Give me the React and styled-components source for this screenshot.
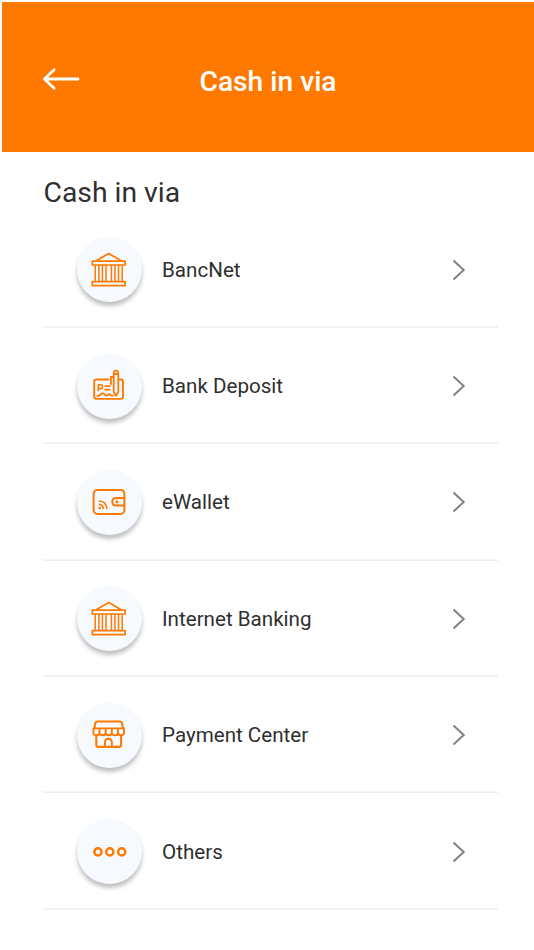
import React from 'react';
import styled, { createGlobalStyle } from 'styled-components';

const BankIcon = () => (
  <Icon viewBox="0 0 36 36">
    <path d="M5.2 8.8L17.7 1.5L30.2 8.8" />
    <path d="M1.3 9.2H34.1V13H1.3Z" />
    <path d="M1.3 29.6H34.1V33.6H1.3Z" />
    <path strokeWidth="1.5" d="M4.2 13V29.5M7.9 13V29.5M11.4 13V29.5M15 13V29.5M20.4 13V29.5M24 13V29.5M27.5 13V29.5M31.2 13V29.5" />
  </Icon>
);

const DepositIcon = () => (
  <Icon viewBox="0 0 36 36">
    <path strokeWidth="1.9" d="M18.2 11.5H5.5Q3.2 11.5 3.2 13.8V28.6Q3.2 30.9 5.5 30.9H29.7Q32 30.9 32 28.6V13.8Q32 11.5 29.7 11.5H28" />
    <path strokeWidth="1.6" d="M7.3 23.3V16.8H9.6Q11.6 16.8 11.6 18.8T9.6 20.8H7.3" />
    <path d="M13.4 18.1H19.4M13.4 21.6H19.4" />
    <path strokeWidth="1.9" d="M5.6 27.8C9 28.8 9.6 25 12 25.4S14 29 16.6 27S19 27.6 20.6 27.6H22.8" />
    <path strokeWidth="1.8" d="M22.7 6V24L25 27.8L27.3 24V6ZM23 6V4.2Q23 2.6 25 2.6T27 4.2V6M22.6 9H19.9V16.8" />
  </Icon>
);

const WalletIcon = () => (
  <Icon viewBox="0 0 36 36">
    <rect x="2.6" y="5.9" width="30.8" height="24" rx="4" strokeWidth="2" />
    <path strokeWidth="2" d="M33 14.1H24.8Q21.3 14.1 21.3 17.8T24.8 21.5H33" />
    <circle cx="26" cy="17.8" r="0.9" strokeWidth="1.4" />
    <path strokeWidth="1.7" d="M7.8 17Q15.6 17.2 15.8 24.9M7.8 20.4Q12.1 20.7 12.3 24.9" />
    <circle cx="8.7" cy="24" r="0.6" strokeWidth="1.4" />
  </Icon>
);

const StoreIcon = () => (
  <Icon viewBox="0 0 36 36">
    <path strokeWidth="2.1" d="M3.5 11.4L4.2 6.6Q4.6 4.5 6.8 4.5H28.6Q30.8 4.5 31.2 6.6L31.9 11.4" />
    <path strokeWidth="1.9" d="M2.4 11.4H33V15.4Q33 18.3 30 18.3T26.9 15.4Q26.9 18.3 23.8 18.3T20.8 15.4Q20.8 18.3 17.7 18.3T14.6 15.4Q14.6 18.3 11.6 18.3T8.5 15.4Q8.5 18.3 5.4 18.3T2.4 15.4ZM8.5 11.4V15.4M14.6 11.4V15.4M20.8 11.4V15.4M26.9 11.4V15.4" />
    <path strokeWidth="2.1" d="M5.3 18V28Q5.3 29.9 7.2 29.9H28.2Q30.1 29.9 30.1 28V18" />
    <path strokeWidth="1.9" d="M14 29.9V25.4Q14 21.8 17.4 21.8T20.8 25.4V29.9" />
  </Icon>
);

const OthersIcon = () => (
  <Icon viewBox="0 0 36 36">
    <circle cx="6.9" cy="17.9" r="3.6" strokeWidth="2.4" />
    <circle cx="18.8" cy="17.9" r="3.6" strokeWidth="2.4" />
    <circle cx="30.7" cy="17.9" r="3.6" strokeWidth="2.4" />
  </Icon>
);

const options = [
  { label: 'BancNet', icon: BankIcon },
  { label: 'Bank Deposit', icon: DepositIcon },
  { label: 'eWallet', icon: WalletIcon },
  { label: 'Internet Banking', icon: BankIcon },
  { label: 'Payment Center', icon: StoreIcon },
  { label: 'Others', icon: OthersIcon },
];

const App = () => {
  return (
    <React.Fragment>
      <GlobalStyle />
      <Wrapper>
        <Header>
          <BackButton aria-label="Back">
            <svg width="38" height="24" viewBox="0 0 38 24">
              <path d="M12.1 2.8L2.4 12L12.1 21.2M2.4 12H36" />
            </svg>
          </BackButton>
          <Title>Cash in via</Title>
        </Header>
        <Content>
          <SectionTitle>Cash in via</SectionTitle>
          <List>
            {options.map(({ label, icon: OptionIcon }) => (
              <Row key={label}>
                <IconCircle>
                  <OptionIcon />
                </IconCircle>
                <Label>{label}</Label>
                <Chevron viewBox="0 0 14 22">
                  <path d="M1.5 1.5L11.7 11L1.5 20.5" />
                </Chevron>
              </Row>
            ))}
          </List>
        </Content>
      </Wrapper>
    </React.Fragment>
  );
};

export default App;

const GlobalStyle = createGlobalStyle`
* {
  box-sizing: border-box;
}
body {
  margin: 0;
  background: #fff;
  font-family: Roboto, "Liberation Sans", sans-serif;
  color: #2f2f2f;
}
`

const Wrapper = styled.div`
width: 534px;
height: 950px;
padding: 1.5px 0 0 2px;
overflow: hidden;
`

const Header = styled.header`
display: grid;
grid-template-columns: 157.5px 1fr;
align-items: center;
height: 150px;
padding: 10px 0 0 40px;
background: #ff7900;
color: #fff;
`

const BackButton = styled.button`
display: flex;
width: 38px;
margin-top: -5px;
padding: 0;
border: 0;
background: none;

path {
  fill: none;
  stroke: #fff;
  stroke-width: 2.8;
  stroke-linecap: round;
  stroke-linejoin: round;
}
`

const Title = styled.h1`
margin: 0;
font-size: 28.2px;
font-weight: 500;
line-height: 34px;
`

const Content = styled.main`
padding: 24px 36px 0 41px;
`

const SectionTitle = styled.h2`
margin: 0 0 0 0.5px;
font-size: 28.3px;
font-weight: 400;
line-height: 34px;
`

const List = styled.ul`
margin: 2px 0 0;
padding: 0;
list-style: none;
`

const Row = styled.li`
display: flex;
align-items: center;
height: 116.4px;
padding: 0 32px 0 33.5px;
box-shadow: inset 0 -1.6px #eee;
`

const IconCircle = styled.div`
display: flex;
flex: none;
align-items: center;
justify-content: center;
width: 65px;
height: 65px;
border-radius: 50%;
background: #f6fafe;
box-shadow: 0 4px 4px rgba(0, 0, 0, 0.25);
`

const Icon = styled.svg`
width: 36px;
height: 36px;
margin-right: 0.5px;
fill: none;
stroke: #ff7900;
stroke-width: 1.7;
stroke-linejoin: round;
`

const Label = styled.span`
flex: 1;
margin-left: 20.5px;
font-size: 20.6px;
line-height: 26px;
`

const Chevron = styled.svg`
width: 14px;
height: 22px;
fill: none;
stroke: #828282;
stroke-width: 2;
`
